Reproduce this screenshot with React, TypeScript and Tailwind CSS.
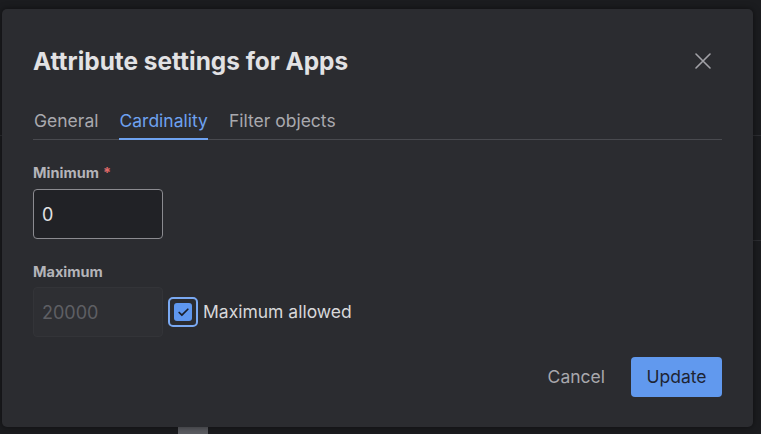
import { Check } from "lucide-react";

// faint bits of the app that sits behind the modal backdrop
function Backdrop() {
  return (
    <div className="absolute inset-0 bg-[#1b1c1f]">
      <div className="absolute left-0 top-[135px] h-px w-[4px] bg-[#2c2d31]" />
      <div className="absolute right-0 top-[135px] h-px w-[8px] bg-[#2c2d31]" />
      <div className="absolute right-0 top-[240px] h-px w-[8px] bg-[#2c2d31]" />
      <div className="absolute bottom-0 left-[178px] h-[7px] w-[30px] bg-[#5a5b60]" />
    </div>
  );
}

function Tab({ label, active }: { label: string; active?: boolean }) {
  return (
    <div
      className={`-mb-px border-b-2 pb-[6px] text-[17.5px] leading-[22px] ${
        active ? "border-[#6ea2f0] text-[#6ea2f0]" : "border-transparent text-[#a9a9ae]"
      }`}
    >
      {label}
    </div>
  );
}

export default function App() {
  return (
    <div
      className="relative h-[434px] w-[761px] overflow-hidden"
      style={{ fontFamily: "Inter, 'Noto Sans', sans-serif" }}
    >
      <Backdrop />

      <div className="absolute left-[2px] top-[9px] flex h-[418px] w-[751px] flex-col rounded-[5px] bg-[#2b2c30] px-[31px] pt-[37px] shadow-[0_0_6px_rgba(0,0,0,0.5)]">
        <header className="flex items-center justify-between pr-[11px]">
          <h1 className="text-[24.4px] font-bold leading-[30px] text-[#e2e2e4]">
            Attribute settings for Apps
          </h1>
          <svg viewBox="0 0 16 16" className="h-[16px] w-[16px]" fill="none">
            <path d="M1 1L15 15M15 1L1 15" stroke="#a2a2a7" strokeWidth="1.6" strokeLinecap="round" />
          </svg>
        </header>

        <nav className="mt-[34px] flex gap-[21px] border-b border-[#494a4f] pl-[1px]">
          <Tab label="General" />
          <Tab label="Cardinality" active />
          <Tab label="Filter objects" />
        </nav>

        <section className="mt-[24px] flex flex-col">
          <label className="flex items-center gap-[4px] text-[14.5px] font-bold leading-[18px] text-[#b4b4b9]">
            Minimum<span className="text-[#e06a6a]">*</span>
          </label>
          <div className="mt-[7px] flex h-[50px] w-[130px] items-center rounded-[4px] border border-[#8b8b90] bg-[#212226] px-[8px] text-[18px] text-[#e2e2e4]">
            0
          </div>

          <label className="mt-[24px] text-[14.5px] font-bold leading-[18px] text-[#b4b4b9]">
            Maximum
          </label>
          <div className="mt-[6px] flex items-center gap-[5px]">
            <div className="flex h-[50px] w-[130px] items-center rounded-[4px] border border-[#333438] bg-[#2e2f33] px-[8px] text-[18px] text-[#5e5f64]">
              20000
            </div>
            <div className="flex h-[30px] w-[30px] items-center justify-center rounded-[5px] border-2 border-[#7aa9f2]">
              <div className="flex h-[18px] w-[18px] items-center justify-center rounded-[3px] bg-[#5f97ee]">
                <Check className="h-[13px] w-[13px] text-[#1a1f2b]" strokeWidth={3.2} />
              </div>
            </div>
            <span className="text-[17.5px] text-[#d8d8da]">Maximum allowed</span>
          </div>
        </section>

        <footer className="mt-[20px] flex items-center justify-end gap-[26px]">
          <button className="text-[17.5px] text-[#a8a8ad]">Cancel</button>
          <button className="h-[40px] w-[91px] rounded-[4px] bg-[#6199ee] text-[17.5px] text-[#1e2433]">
            Update
          </button>
        </footer>
      </div>
    </div>
  );
}
